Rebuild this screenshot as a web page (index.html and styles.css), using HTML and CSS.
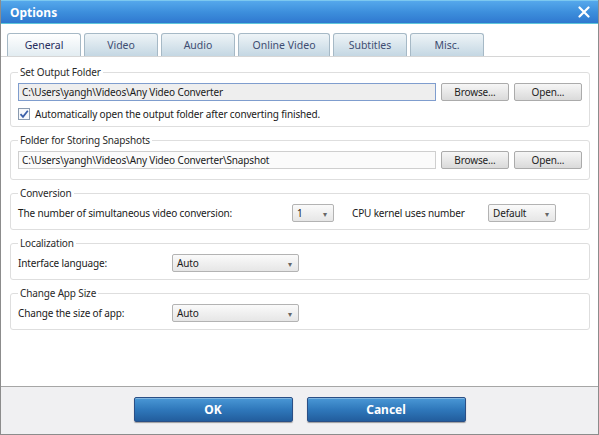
FILE: index.html
```html
<!DOCTYPE html>
<html>
<head>
<meta charset="utf-8">
<link rel="stylesheet" href="styles.css">
</head>
<body>
<div class="window">
  <div class="titlebar">
    <span class="title">Options</span>
    <svg class="close" width="12" height="12" viewBox="0 0 12 12"><path d="M1.5 1.5 L10.5 10.5 M10.5 1.5 L1.5 10.5" stroke="#fff" stroke-width="2.2" stroke-linecap="round"/></svg>
  </div>
  <div class="tabstrip">
    <div class="tab active">General</div>
    <div class="tab">Video</div>
    <div class="tab">Audio</div>
    <div class="tab wide">Online Video</div>
    <div class="tab">Subtitles</div>
    <div class="tab">Misc.</div>
  </div>
  <div class="content">
    <fieldset class="group g-first">
      <legend>Set Output Folder</legend>
      <div class="row">
        <div class="path focus">C:\Users\yangh\Videos\Any Video Converter</div>
        <div class="btn">Browse...</div>
        <div class="btn">Open...</div>
      </div>
      <div class="row check-row">
        <svg class="checkbox" width="12" height="12" viewBox="0 0 12 12"><rect x="0.5" y="0.5" width="11" height="11" fill="#f6f8fb" stroke="#8a9bb0"/><path d="M2.5 6.2 L5 8.8 L9.8 2.8" fill="none" stroke="#3a5fa8" stroke-width="1.8"/></svg>
        <span>Automatically open the output folder after converting finished.</span>
      </div>
    </fieldset>
    <fieldset class="group g-second">
      <legend>Folder for Storing Snapshots</legend>
      <div class="row">
        <div class="path">C:\Users\yangh\Videos\Any Video Converter\Snapshot</div>
        <div class="btn">Browse...</div>
        <div class="btn">Open...</div>
      </div>
    </fieldset>
    <fieldset class="group">
      <legend>Conversion</legend>
      <div class="row">
        <span class="lbl-conv">The number of simultaneous video conversion:</span>
        <div class="select s-num"><span>1</span><i class="arrow">▾</i></div>
        <span class="lbl-cpu">CPU kernel uses number</span>
        <div class="select s-def"><span>Default</span><i class="arrow">▾</i></div>
      </div>
    </fieldset>
    <fieldset class="group">
      <legend>Localization</legend>
      <div class="row">
        <span class="lbl">Interface language:</span>
        <div class="select s-wide"><span>Auto</span><i class="arrow">▾</i></div>
      </div>
    </fieldset>
    <fieldset class="group">
      <legend>Change App Size</legend>
      <div class="row">
        <span class="lbl">Change the size of app:</span>
        <div class="select s-wide"><span>Auto</span><i class="arrow">▾</i></div>
      </div>
    </fieldset>
  </div>
  <div class="footer">
    <div class="bigbtn">OK</div>
    <div class="bigbtn">Cancel</div>
  </div>
</div>
</body>
</html>
```

FILE: styles.css
```css
* { box-sizing: border-box; }
html, body { margin: 0; padding: 0; background: #fff; }
body {
  font-family: "Noto Sans", "Open Sans", sans-serif;
  font-size: 10px;
  letter-spacing: -0.15px;
  color: #1a1a1a;
}
.window {
  width: 599px;
  height: 435px;
  display: flex;
  flex-direction: column;
  border: 1px solid #8c8c8c;
  border-top: none;
  background: #fff;
}
.titlebar {
  height: 24px;
  flex: none;
  display: flex;
  align-items: center;
  justify-content: space-between;
  padding: 0 8px 0 9px;
  background: linear-gradient(#55a8ec 0%, #3d8fdc 50%, #2f78cf 100%);
  border-top: 1px solid #7cc8f0;
  border-bottom: 1px solid #5ec6da;
}
.title {
  color: #fff;
  font-weight: bold;
  font-size: 12px;
  letter-spacing: 0;
}
.close { display: block; }
.tabstrip {
  flex: none;
  display: flex;
  gap: 3px;
  padding: 9px 0 0 6px;
  height: 33px;
  border-bottom: 1px solid #d6d6d6;
  margin-right: 8px;
}
.tab {
  width: 74px;
  height: 23px;
  display: flex;
  align-items: center;
  justify-content: center;
  border: 1px solid #a6b9c6;
  border-bottom: none;
  border-radius: 3px 3px 0 0;
  background: linear-gradient(#eef4f7, #c4d7e3);
  color: #3e4d72;
  font-size: 10.5px;
  letter-spacing: 0;
}
.tab.wide { width: 92px; }
.tab.active {
  background: linear-gradient(#ffffff, #e2ecf1);
  color: #262d5c;
}
.content {
  flex: 1;
  display: flex;
  flex-direction: column;
  gap: 5px;
  padding: 7px 8px 0 9px;
}
.group {
  margin: 0;
  padding: 3px 7px 7px 7px;
  border: 1px solid #dedede;
  border-radius: 3px;
}
.group.g-first { padding-bottom: 5px; }
.group.g-second { padding-bottom: 10px; }
.group legend {
  padding: 0 2px;
  color: #2a2a2a;
  line-height: 16px;
}
.row {
  display: flex;
  align-items: center;
  gap: 5px;
  height: 18px;
}
.path {
  flex: 1;
  height: 18px;
  line-height: 16px;
  padding: 0 3px;
  border: 1px solid #cfcfcf;
  background: #fbfbfb;
  white-space: nowrap;
  overflow: hidden;
}
.path.focus {
  border-color: #7f9dce;
  background: #eeeeee;
}
.btn {
  width: 68px;
  height: 18px;
  display: flex;
  align-items: center;
  justify-content: center;
  border: 1px solid #ababab;
  border-radius: 2px;
  background: linear-gradient(#f6f6f6, #dadada);
  color: #1e1e1e;
}
.check-row {
  margin-top: 6px;
  height: 14px;
  gap: 5px;
}
.checkbox { flex: none; }
.lbl-conv { width: 269px; }
.lbl-cpu { margin-left: 13px; width: 131px; }
.lbl { width: 149px; }
.select {
  height: 18px;
  display: flex;
  align-items: center;
  justify-content: space-between;
  padding: 0 6px 0 4px;
  border: 1px solid #b3b3b3;
  border-radius: 2px;
  background: linear-gradient(#fafafa, #e6e6e6);
}
.arrow {
  font-style: normal;
  font-size: 8px;
  color: #666;
}
.s-num { width: 42px; }
.s-def { width: 68px; }
.s-wide { width: 127px; }
.footer {
  flex: none;
  height: 48px;
  display: flex;
  justify-content: center;
  align-items: center;
  gap: 14px;
  background: #f0f0f2;
  border-top: 1px solid #a6a6a6;
  padding-bottom: 2px;
}
.bigbtn {
  width: 159px;
  height: 25px;
  display: flex;
  align-items: center;
  justify-content: center;
  color: #fff;
  font-weight: bold;
  font-size: 12px;
  letter-spacing: 0;
  border: 1px solid #2a4f86;
  border-radius: 2px;
  background: linear-gradient(#4a98d6 0%, #2f78bb 50%, #225d9d 100%);
  box-shadow: 0 1px 1px rgba(0,0,0,0.35), inset 0 1px 0 rgba(255,255,255,0.3);
}
```
